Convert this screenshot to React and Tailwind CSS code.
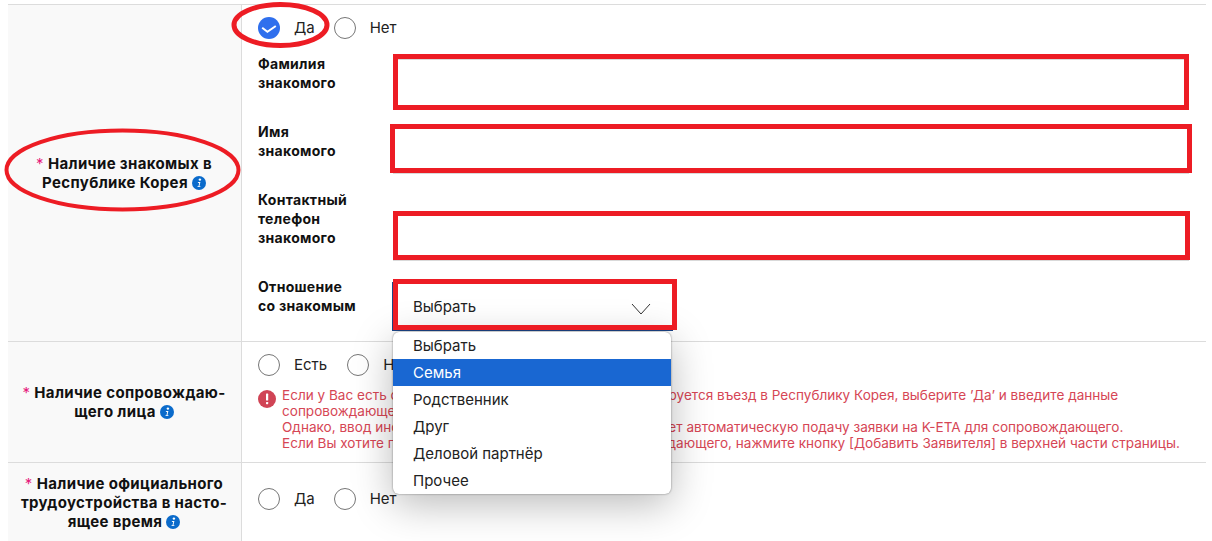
const FONT = "font-['Inter','Noto_Sans',sans-serif]";

function Info() {
  return (
    <svg viewBox="0 0 14 14" className="inline-block w-[14px] h-[14px] ml-[4px] align-[-2px]">
      <circle cx="7" cy="7" r="7" fill="#0b6bcb" />
      <circle cx="7.9" cy="3.6" r="1.2" fill="#fff" />
      <path d="M5.6 6h2.8l-1 4.2h1.1l-.2.9H5.4l.2-.9h.9l.7-3.3h-.8z" fill="#fff" />
    </svg>
  );
}

function Radio({ label, checked, gap = "mr-[20px]" }) {
  return (
    <div className={`flex items-center ${gap}`}>
      {checked ? (
        <svg viewBox="0 0 22 22" className="w-[22px] h-[22px]">
          <circle cx="11" cy="11" r="11" fill="#2f6fed" />
          <path d="M4.2 10.8l5.2 4 8.4-5.8" fill="none" stroke="#fff" strokeWidth="2" />
        </svg>
      ) : (
        <span className="block w-[22px] h-[22px] rounded-full border border-[#767676] bg-white" />
      )}
      <span className="ml-[14px] text-[15px] leading-[22px] text-[#222]">{label}</span>
    </div>
  );
}

function Star() {
  return <span className="text-[#e6197d] font-normal mr-[4px]">*</span>;
}

function Field({ label, mt, className = "", children }) {
  return (
    <div className={`flex ${className}`}>
      <div className="w-[135px] shrink-0 text-[14px] tracking-[0.3px] leading-[19px] font-bold text-[#111] whitespace-pre-line">{label}</div>
      {children || <div className={`flex-1 h-[48px] border border-[#d9d9d9] bg-white ${mt}`} />}
    </div>
  );
}

function HeadCell({ children }) {
  return (
    <div className="w-[234px] shrink-0 bg-[#f9f9f9] border-r border-[#dcdcdc] flex items-center justify-center text-center text-[15px] tracking-[0.35px] leading-[19px] font-bold text-[#111]">
      <div className="-ml-[1px]">{children}</div>
    </div>
  );
}

const options = ["Выбрать", "Семья", "Родственник", "Друг", "Деловой партнёр", "Прочее"];

export default function App() {
  return (
    <div className={`relative w-[1212px] h-[541px] overflow-hidden bg-white pl-[8px] pr-[6px] pt-[4px] ${FONT}`}>
      <div className="flex h-[337px] border-t border-[#dcdcdc]">
        <HeadCell>
          <Star />Наличие знакомых в<br />Республике Корея<Info />
        </HeadCell>
        <div className="flex-1 pl-[16px] pr-[17px] pt-[12px]">
          <div className="flex h-[22px]">
            <Radio label="Да" checked gap="mr-[19px]" />
            <Radio label="Нет" />
          </div>
          <Field label={"Фамилия\nзнакомого"} mt="mt-[5px]" className="mt-[15px] h-[68px]" />
          <Field label={"Имя\nзнакомого"} mt="mt-[4px]" className="h-[68px]" />
          <Field label={"Контактный\nтелефон\nзнакомого"} mt="mt-[23px]" className="h-[87px]" />
          <Field label={"Отношение\nсо знакомым"}>
            <div className="mt-[5px] -ml-[1px] w-[281px] h-[49px] pt-[1px] border border-[#1c4587] bg-white flex items-center justify-between pl-[20px] pr-[21px]">
              <span className="text-[15px] text-[#222]">Выбрать</span>
              <svg viewBox="0 0 20 12" className="w-[20px] h-[12px] mt-[4px]">
                <path d="M1 1l9 10 9-10" fill="none" stroke="#333" strokeWidth="1" />
              </svg>
            </div>
          </Field>
        </div>
      </div>

      <div className="flex h-[121px] border-t border-[#dcdcdc]">
        <HeadCell>
          <Star />Наличие сопровождаю-<br />щего лица<Info />
        </HeadCell>
        <div className="flex-1 pl-[16px] pt-[12px]">
          <div className="flex h-[22px]">
            <Radio label="Есть" />
            <Radio label="Нет" />
          </div>
          <div className="flex mt-[11px]">
            <svg viewBox="0 0 18 18" className="w-[18px] h-[18px] shrink-0 mt-[3px]">
              <circle cx="9" cy="9" r="9" fill="#d04455" />
              <rect x="8" y="3.6" width="2.2" height="7" rx="0.6" fill="#fff" />
              <rect x="8" y="12" width="2.2" height="2.2" rx="0.6" fill="#fff" />
            </svg>
            <div className="ml-[6px] text-[13.57px] leading-[16px] text-[#d64655] whitespace-nowrap">
              <div>Если у Вас есть сопровождающее лицо, с которым планируется въезд в Республику Корея, выберите ’Да’ и введите данные</div>
              <div>сопровождающего лица.</div>
              <div>Однако, ввод информации о сопровождающем не означает автоматическую подачу заявки на K-ETA для сопровождающего.</div>
              <div>Если Вы хотите подать заявление на K-ETA для сопровождающего, нажмите кнопку [Добавить Заявителя] в верхней части страницы.</div>
            </div>
          </div>
        </div>
      </div>

      <div className="flex h-[80px] border-t border-[#dcdcdc]">
        <HeadCell>
          <Star />Наличие официального<br />трудоустройства в насто-<br />ящее время<Info />
        </HeadCell>
        <div className="flex-1 pl-[16px] pt-[25px]">
          <div className="flex h-[22px]">
            <Radio label="Да" gap="mr-[19px]" />
            <Radio label="Нет" />
          </div>
        </div>
      </div>

      <ul className="absolute left-[393px] top-[332px] w-[278px] rounded-[6px] bg-white overflow-hidden shadow-[0_0_2px_rgba(0,0,0,0.5),0_10px_40px_rgba(0,0,0,0.28)]">
        {options.map((o, i) => (
          <li
            key={o}
            className={`h-[27px] pl-[20px] text-[15px] leading-[27px] ${i === 1 ? "bg-[#1967d2] text-white" : "text-[#222]"}`}
          >
            {o}
          </li>
        ))}
      </ul>

      <svg className="absolute left-0 top-0 pointer-events-none" width="1212" height="541" fill="none" stroke="#ed1c24">
        <ellipse cx="280.5" cy="25" rx="46.5" ry="20.5" strokeWidth="5" />
        <ellipse cx="122.5" cy="170" rx="116" ry="39.5" strokeWidth="4" />
        <rect x="395.5" y="56.5" width="791" height="51" strokeWidth="5" />
        <rect x="392.5" y="126.5" width="797" height="44" strokeWidth="5" />
        <rect x="395.5" y="213.5" width="792" height="44" strokeWidth="5" />
        <rect x="395.5" y="281.5" width="279" height="46" strokeWidth="5" />
      </svg>
    </div>
  );
}
